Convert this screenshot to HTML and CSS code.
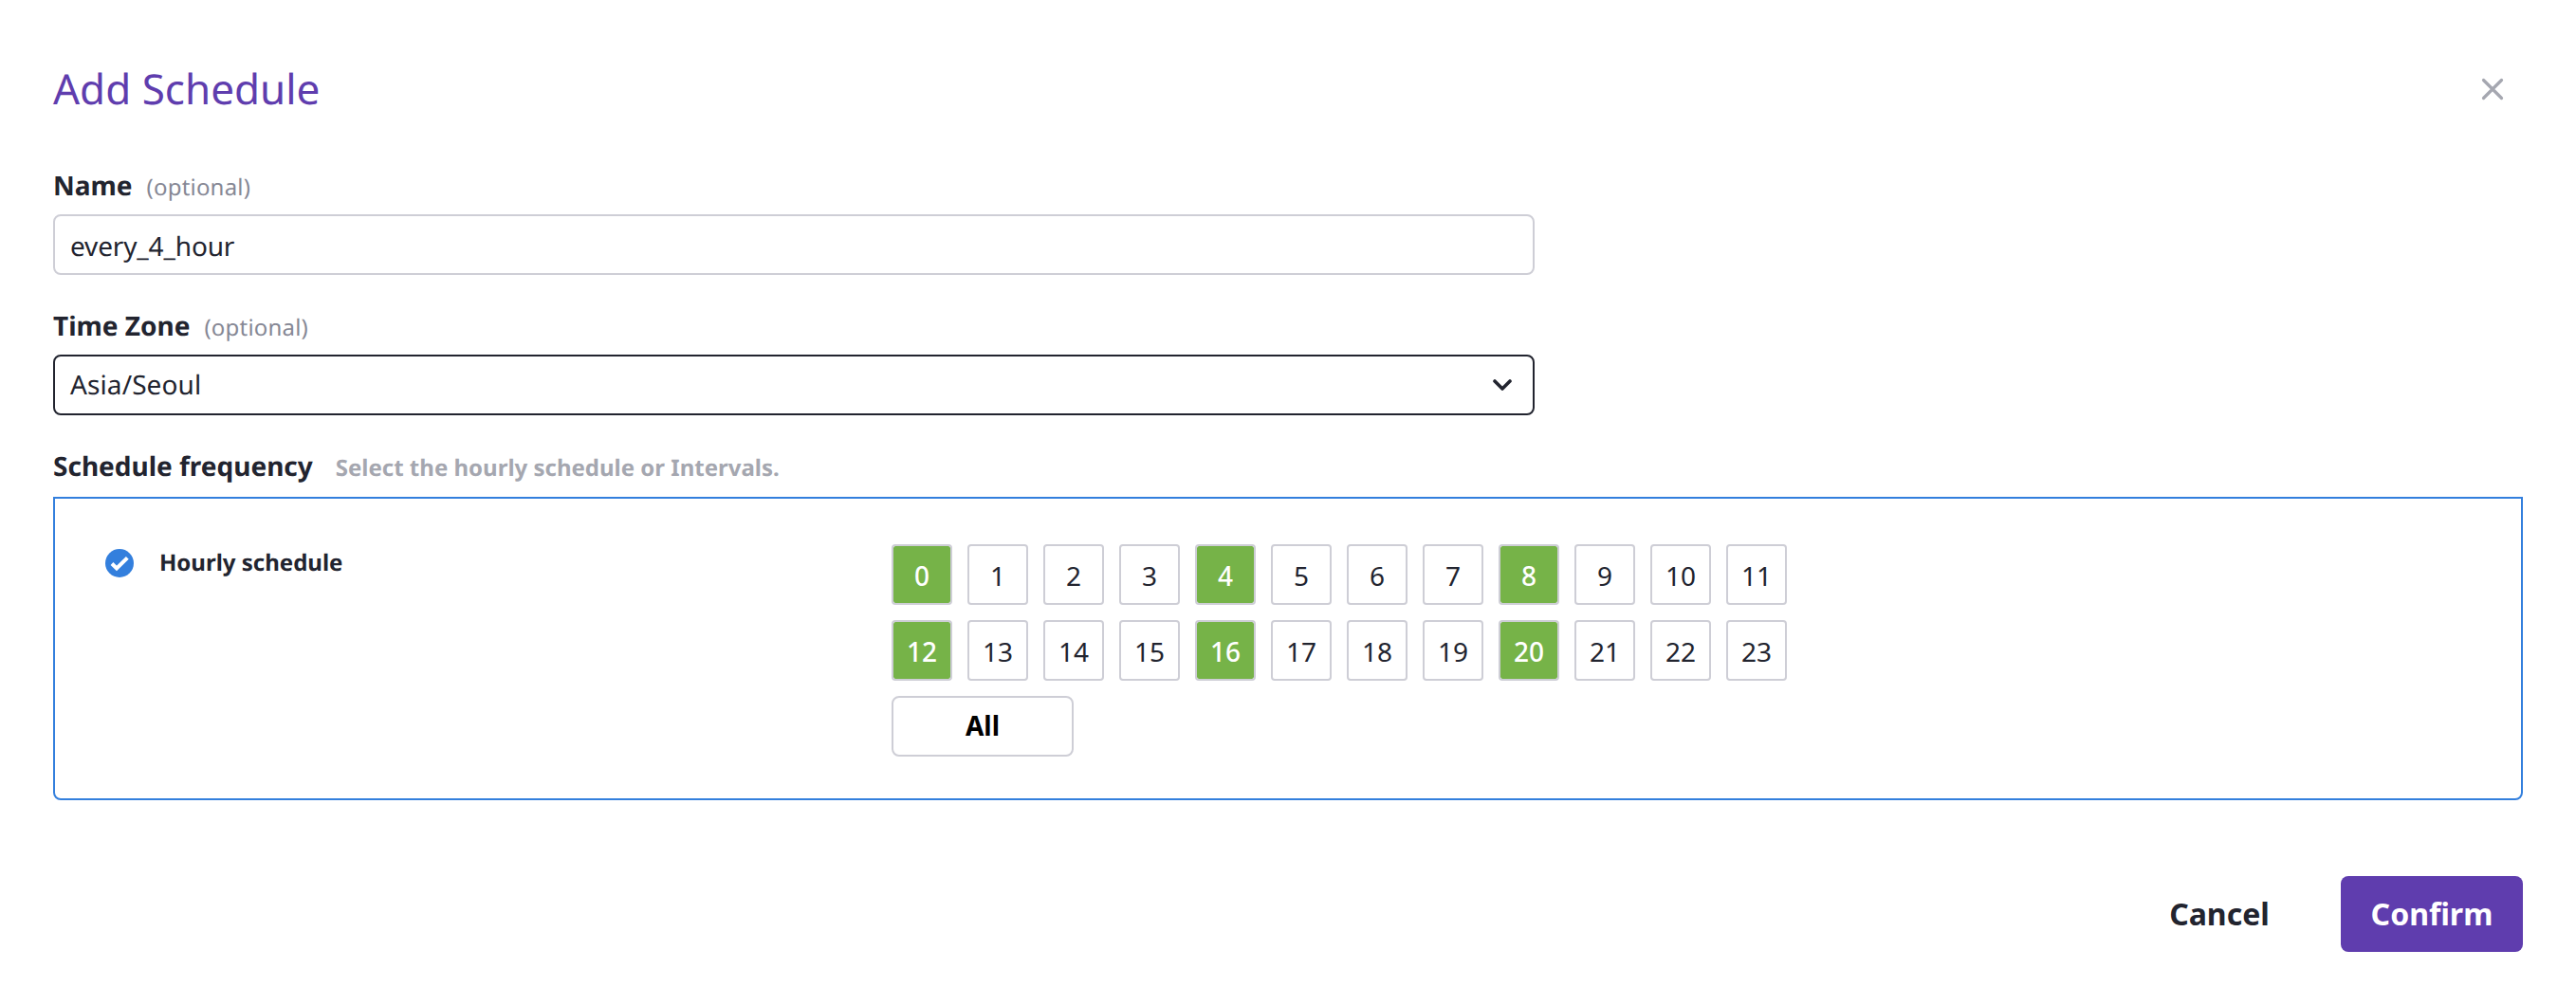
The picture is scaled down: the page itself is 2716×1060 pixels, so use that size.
FILE: index.html
```html
<!DOCTYPE html>
<html lang="en">
<head>
<meta charset="utf-8">
<title>Add Schedule</title>
<link rel="stylesheet" href="styles.css">
</head>
<body>
<main class="dialog">
  <header class="dialog-header">
    <h1 class="dialog-title">Add Schedule</h1>
    <button class="close" type="button" aria-label="Close">
      <svg width="24" height="24" viewBox="0 0 24 24"><path d="M2.500 2.500L21.500 21.500M21.500 2.500L2.500 21.500"/></svg>
    </button>
  </header>

  <section class="field">
    <div class="label">Name <span class="optional">(optional)</span></div>
    <div class="control control-text">every_4_hour</div>
  </section>

  <section class="field">
    <div class="label">Time Zone <span class="optional">(optional)</span></div>
    <div class="control control-select">Asia/Seoul
      <svg class="chevron" width="20" height="12" viewBox="0 0 20 12"><path d="M2 2L10 10L18 2"/></svg>
    </div>
  </section>

  <section class="frequency">
    <div class="label">Schedule frequency <span class="hint">Select the hourly schedule or Intervals.</span></div>
    <div class="panel">
      <div class="option">
        <svg class="check" width="30" height="30" viewBox="0 0 30 30"><circle cx="15" cy="15" r="15"/><path d="M7 15.500L12 20.500L23.300 9.300"/></svg>
        <span class="option-name">Hourly schedule</span>
      </div>
      <div class="hours">
        <button class="hour selected">0</button><button class="hour">1</button><button class="hour">2</button><button class="hour">3</button><button class="hour selected">4</button><button class="hour">5</button><button class="hour">6</button><button class="hour">7</button><button class="hour selected">8</button><button class="hour">9</button><button class="hour">10</button><button class="hour">11</button>
        <button class="hour selected">12</button><button class="hour">13</button><button class="hour">14</button><button class="hour">15</button><button class="hour selected">16</button><button class="hour">17</button><button class="hour">18</button><button class="hour">19</button><button class="hour selected">20</button><button class="hour">21</button><button class="hour">22</button><button class="hour">23</button>
        <button class="all">All</button>
      </div>
    </div>
  </section>

  <footer class="actions">
    <button class="button cancel">Cancel</button>
    <button class="button confirm">Confirm</button>
  </footer>
</main>
</body>
</html>
```
FILE: styles.css
```css
* { box-sizing: border-box; }

body {
  margin: 0;
  background: #fff;
  color: #22242f;
  font-family: "Noto Sans", sans-serif;
  text-rendering: geometricPrecision;
}

button {
  margin: 0;
  padding: 0;
  border: 0;
  background: none;
  color: inherit;
  font: inherit;
}

.dialog {
  height: 1060px;
  padding: 63px 56px 0;
}

.dialog-header {
  display: flex;
  align-items: center;
  justify-content: space-between;
  height: 60px;
  margin-bottom: 53px;
}

.dialog-title {
  margin: 0;
  color: #5f3dae;
  font-size: 44px;
  font-weight: 400;
  line-height: 60px;
}

.close {
  display: flex;
  padding: 2px 20px 0 0;
}

.close path {
  fill: none;
  stroke: #a5a7b0;
  stroke-width: 3.200;
  stroke-linecap: round;
}

.field { margin-bottom: 34px; }

.label {
  display: flex;
  align-items: baseline;
  height: 40px;
  margin-bottom: 10px;
  font-size: 28px;
  font-weight: 700;
  line-height: 40px;
}

.optional {
  margin-left: 15px;
  color: #868895;
  font-size: 24px;
  font-weight: 400;
  letter-spacing: 0.2px;
}

.hint {
  margin-left: 24px;
  color: #a5a7b0;
  font-size: 24px;
}

.control {
  display: flex;
  align-items: center;
  justify-content: space-between;
  width: 1562px;
  height: 64px;
  padding: 0 22px 0 16px;
  border: 2px solid #ceced6;
  border-radius: 8px;
  font-size: 28px;
  line-height: 36px;
}

.control-text {
  padding-top: 3px;
  letter-spacing: -0.15px;
}

.control-select {
  border-color: #22242f;
  letter-spacing: 0.1px;
}

.chevron path {
  fill: none;
  stroke: #22242f;
  stroke-width: 3.600;
  stroke-linecap: round;
  stroke-linejoin: round;
}

.frequency .label { margin-bottom: 12px; }

.panel {
  display: grid;
  grid-template-columns: 829px auto;
  align-items: start;
  justify-content: start;
  height: 320px;
  padding: 48px 53px;
  border: 2px solid #337fdd;
  border-radius: 0 0 8px 8px;
}

.option {
  display: flex;
  align-items: center;
  gap: 27px;
  padding-top: 5px;
  font-size: 24px;
  font-weight: 700;
  line-height: 30px;
}

.check circle { fill: #337fdd; }

.check path {
  fill: none;
  stroke: #fff;
  stroke-width: 4;
}

.hours {
  display: grid;
  grid-template-columns: repeat(12, 64px);
  grid-auto-rows: 64px;
  gap: 16px;
}

.hour {
  padding-top: 2px;
  border: 2px solid #ceced6;
  border-radius: 4px;
  font-size: 28px;
  line-height: 38px;
}

.selected {
  background: #76b348;
  background-clip: padding-box;
  color: #fff;
  font-weight: 500;
}

.all {
  width: 192px;
  padding-bottom: 2px;
  border: 2px solid #ceced6;
  border-radius: 8px;
  color: #000;
  font-size: 28px;
  font-weight: 700;
  line-height: 38px;
}

.actions {
  display: flex;
  justify-content: flex-end;
  gap: 32px;
  margin-top: 80px;
}

.button {
  height: 80px;
  border-radius: 8px;
  font-size: 32px;
  font-weight: 700;
  line-height: 44px;
}

.cancel { width: 192px; }

.confirm {
  width: 192px;
  background: #5f3dae;
  color: #fff;
}
```
